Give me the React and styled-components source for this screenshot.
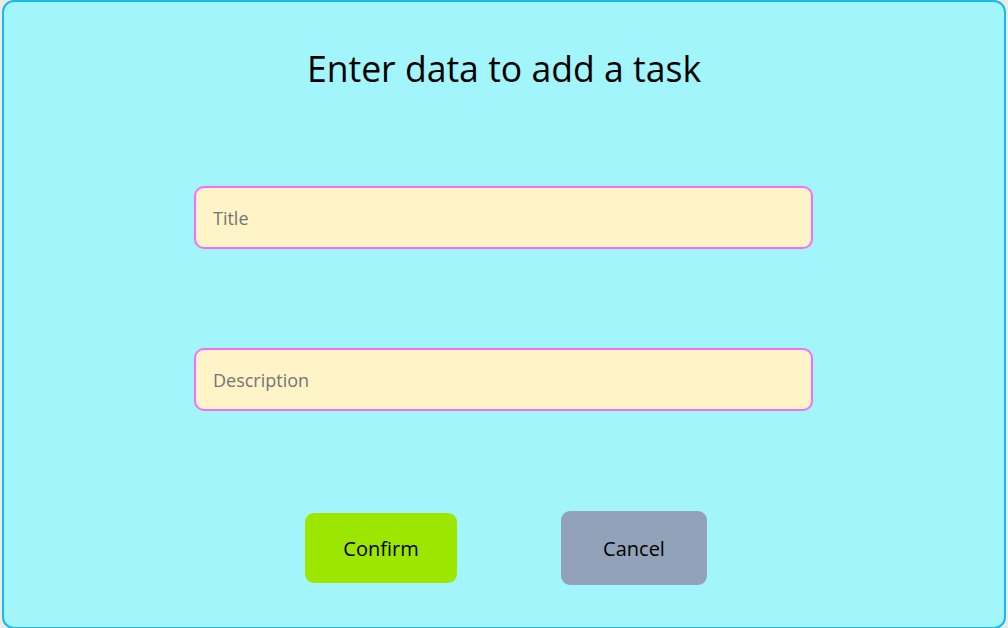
import React from 'react';
import styled, {createGlobalStyle} from 'styled-components';

const GlobalStyle = createGlobalStyle`
  html, body {
    margin: 0;
    padding: 0;
    background-color: #ecebe4;
    font-family: 'Open Sans', 'Noto Sans', sans-serif;
  }
`;

function App() {
  return (
    <>
      <GlobalStyle />
      <Page>
        <Dialog>
          <Heading>Enter data to add a task</Heading>
          <Fields>
            <Input type="text" placeholder="Title" />
            <Input type="text" placeholder="Description" />
          </Fields>
          <Actions>
            <Button $bg="#9de600" $w="152px" $h="70px">
              Confirm
            </Button>
            <Button $bg="#92a2b9" $w="146px" $h="74px">
              Cancel
            </Button>
          </Actions>
        </Dialog>
      </Page>
    </>
  );
}

const Page = styled.div`
  display: flex;
  padding-left: 2px;
  height: 628px;
  overflow: hidden;
`;

const Dialog = styled.div`
  box-sizing: border-box;
  width: 1004px;
  height: 629px;
  display: flex;
  flex-direction: column;
  align-items: center;
  background-color: #a3f5fc;
  border: 2px solid #19b8f0;
  border-radius: 12px;
`;

const Heading = styled.h1`
  margin: 42px 0 0;
  font-size: 35.6px;
  font-weight: 400;
  line-height: 48px;
  color: #000;
`;

const Fields = styled.div`
  display: flex;
  flex-direction: column;
  gap: 99px;
  margin-top: 94px;
  margin-right: 1px;
  width: 619px;
`;

const Input = styled.input`
  box-sizing: border-box;
  width: 100%;
  height: 63px;
  padding: 0 17px;
  background-color: #fff3c8;
  border: 2px solid #f270f6;
  border-radius: 10px;
  font-family: 'Open Sans', 'Noto Sans', sans-serif;
  font-size: 18px;
  color: #000;
  outline: none;

  ::placeholder {
    color: #8c8a78;
  }
`;

const Actions = styled.div`
  display: flex;
  align-items: center;
  gap: 104px;
  margin-top: 100px;
  margin-left: 4px;
`;

const Button = styled.button`
  width: ${(p) => p.$w};
  height: ${(p) => p.$h};
  background-color: ${(p) => p.$bg};
  border: none;
  border-radius: 9px;
  font-family: 'Open Sans', 'Noto Sans', sans-serif;
  font-size: 20px;
  color: #000;
  cursor: pointer;
`;

export default App;
